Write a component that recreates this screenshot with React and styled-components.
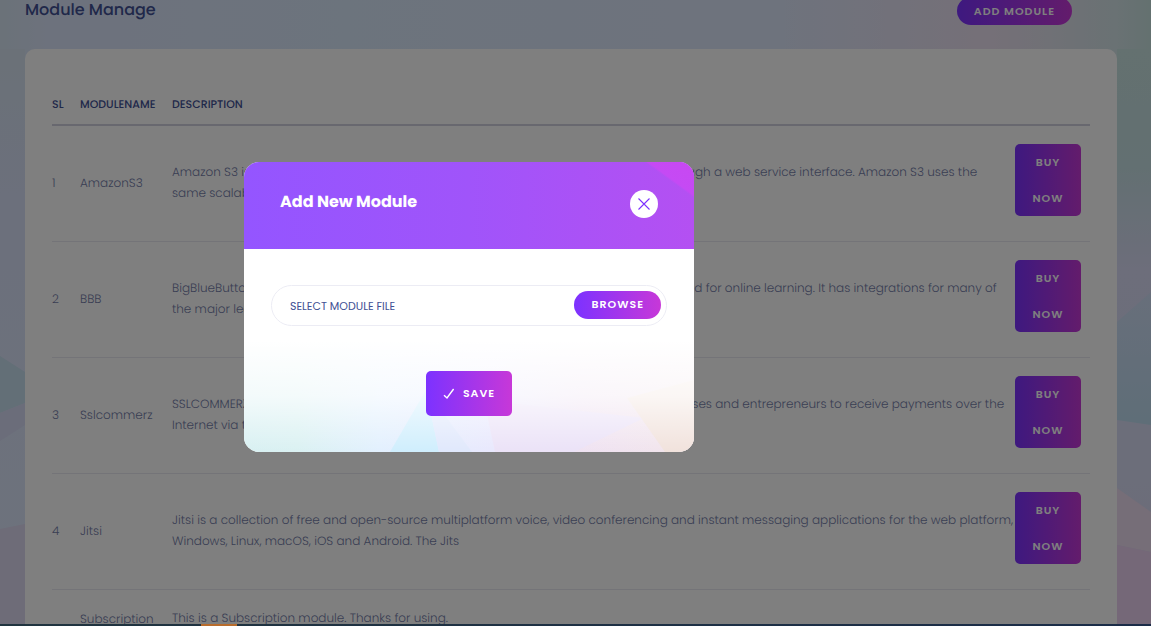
import React from "react";
import styled, { createGlobalStyle } from "styled-components";

const GlobalStyle = createGlobalStyle`
  *, *::before, *::after { box-sizing: border-box; }
  html, body { margin: 0; height: 100%; overflow: hidden; }
  body {
    background: #dde6fb;
    color: #747da8;
    font-family: Poppins, Inter, sans-serif;
    font-size: 12px;
    font-weight: 300;
    line-height: 21px;
    text-rendering: geometricPrecision;
  }
  button, input { font: inherit; }
`;

const Page = styled.main`
  position: relative;
  height: 100vh;
  overflow: hidden;
  padding: 0 34px 0 25px;
  background: linear-gradient(90deg, #d6e4f2 0%, #dbe4fa 4%, #d9e8fa 30%, #dde6fa 68%, #ebe0f0 86%, #d4e4e8 97%, #c8e2e0 100%);
`;

const Backdrop = styled.svg`
  position: absolute;
  inset: 0;
  width: 100%;
  height: 100%;
`;

const PageHeader = styled.header`
  position: relative;
  display: flex;
  align-items: center;
  justify-content: space-between;
  height: 22px;
  margin-bottom: 27px;
  padding-right: 45px;
`;

const PageTitle = styled.h1`
  margin: 0;
  padding-bottom: 2px;
  color: #415094;
  font-size: 16px;
  font-weight: 500;
  line-height: 20px;
`;

const Button = styled.button`
  display: inline-flex;
  align-items: center;
  justify-content: center;
  gap: 8px;
  height: ${(p) => (p.$pill ? 28 : 45)}px;
  padding: 0 17px;
  border: 0;
  border-radius: ${(p) => (p.$pill ? 14 : 5)}px;
  background: linear-gradient(90deg, #7c32ff 0%, #c738d8 100%);
  color: #fff;
  font-size: 11px;
  font-weight: 600;
  letter-spacing: 1px;
  text-transform: uppercase;
  white-space: nowrap;
  cursor: pointer;
`;

const BuyButton = styled(Button)`
  display: block;
  width: 66px;
  height: auto;
  padding: 0 16px;
  line-height: 36px;
  white-space: normal;
`;

const Card = styled.section`
  position: relative;
  min-height: 100%;
  padding: 35px 27px 0;
  border-radius: 10px;
  background: #fff;
`;

const Table = styled.table`
  width: 100%;
  table-layout: fixed;
  border-collapse: separate;
  border-spacing: 0;
`;

const Col = styled.col`
  width: ${(p) => p.$w}px;
`;

const HeadCell = styled.th`
  height: 42px;
  padding: 0;
  border-bottom: 2px solid #d0d1df;
  color: #415094;
  font-size: 11px;
  font-weight: 500;
  text-align: left;
  text-transform: uppercase;
`;

const Cell = styled.td`
  padding: 18px 0;
  border-bottom: 1px solid #e9e9f0;
  vertical-align: middle;
  white-space: pre-line;
`;

const ActionCell = styled(Cell)`
  padding: 18px 0 25px;
`;

const Description = styled.p`
  min-height: 44px;
  margin: 0;
  padding-bottom: 2px;
`;

const Overlay = styled.div`
  position: fixed;
  inset: 0;
  display: flex;
  align-items: center;
  justify-content: center;
  padding: 0 213px 12px 0;
  background: rgba(0, 0, 0, 0.5);
`;

const Modal = styled.section`
  width: 450px;
  max-width: 90%;
  border-radius: 15px;
  overflow: hidden;
  background: #fff;
`;

const ModalHeader = styled.header`
  display: flex;
  align-items: center;
  justify-content: space-between;
  height: 87px;
  padding: 0 36px 3px;
  background:
    linear-gradient(216deg, #c848f2 0, #c54af4 27px, transparent 29px),
    linear-gradient(90deg, #9455ff 0%, #a054fa 50%, #b450f2 100%);
`;

const ModalTitle = styled.h2`
  margin: 0;
  padding-bottom: 6px;
  color: #fff;
  font-size: 16px;
  font-weight: 700;
`;

const CloseButton = styled.button`
  display: flex;
  align-items: center;
  justify-content: center;
  width: 28px;
  height: 28px;
  padding: 0;
  border: 0;
  border-radius: 50%;
  background: #fff;
  color: #7c32ff;
  cursor: pointer;
`;

const ModalBody = styled.form`
  position: relative;
  display: flex;
  flex-direction: column;
  align-items: center;
  gap: 45px;
  padding: 36px 27px;
`;

const ModalArt = styled.svg`
  position: absolute;
  left: 0;
  bottom: 0;
  width: 100%;
  height: 112px;
`;

const FilePicker = styled.div`
  position: relative;
  display: flex;
  align-items: center;
  width: 100%;
  height: 41px;
  padding: 0 5px 2px 18px;
  border: 1px solid #ececf4;
  border-radius: 21px;
  background: #fff;
`;

const FileName = styled.input`
  flex: 1;
  min-width: 0;
  padding: 4px 0 0;
  border: 0;
  outline: 0;
  background: transparent;
  font-size: 11px;
  font-weight: 400;
  text-transform: uppercase;
  &::placeholder {
    color: #415094;
    opacity: 1;
  }
`;

const SaveButton = styled(Button)`
  position: relative;
`;

const Dock = styled.footer`
  position: fixed;
  inset: auto 0 0 0;
  display: flex;
  height: 2px;
  padding-left: 201px;
  background: linear-gradient(90deg, #20343f, #1b2c48);
`;

const DockItem = styled.span`
  width: 36px;
  background: #b86c2c;
`;

const modules = [
  {
    name: "AmazonS3",
    text: "Amazon S3 is a service offered by Amazon Web Services that offers object storage through a web service interface. Amazon S3 uses the\nsame scalable storage infrastructure",
  },
  {
    name: "BBB",
    text: "BigBlueButton is a free software web conferencing system for GNU/Linux servers designed for online learning. It has integrations for many of\nthe major learning and content systems",
  },
  {
    name: "Sslcommerz",
    text: "SSLCOMMERZ is the largest payment gateway in Bangladesh that enables small businesses and entrepreneurs to receive payments over the\nInternet via their online store",
  },
  {
    name: "Jitsi",
    text: "Jitsi is a collection of free and open-source multiplatform voice, video conferencing and instant messaging applications for the web platform,\nWindows, Linux, macOS, iOS and Android. The Jits",
  },
];

function PageBackdrop() {
  return (
    <Backdrop viewBox="0 0 1151 626" preserveAspectRatio="none" aria-hidden="true">
      <defs>
        <linearGradient id="rightFall" x1="0" y1="0" x2="0" y2="1">
          <stop offset="0" stopColor="#c8e2e0" />
          <stop offset="0.2" stopColor="#c6e0e4" />
          <stop offset="0.38" stopColor="#dadcf6" />
          <stop offset="0.75" stopColor="#d8dcf4" />
          <stop offset="1" stopColor="#dcd6f2" />
        </linearGradient>
        <linearGradient id="blueFacet" x1="0" y1="0" x2="0" y2="1">
          <stop offset="0" stopColor="#d0def6" />
          <stop offset="1" stopColor="#bedcf0" />
        </linearGradient>
        <linearGradient id="leftFall" x1="0" y1="0" x2="0" y2="1">
          <stop offset="0" stopColor="#d6e3f0" />
          <stop offset="0.25" stopColor="#d8e0f8" />
          <stop offset="1" stopColor="#dce6fa" />
        </linearGradient>
      </defs>
      <rect x="0" y="49" width="25" height="577" fill="url(#leftFall)" />
      <polygon points="0,356 25,372 25,403 0,413" fill="#c6deee" />
      <polygon points="0,413 25,403 25,425 0,441" fill="#d6daf4" />
      <polygon points="0,529 25,524 25,626 0,626" fill="#dcd8f0" />
      <rect x="1117" y="49" width="34" height="577" fill="url(#rightFall)" />
      <polygon points="1117,322 1151,292 1151,425 1117,420" fill="url(#blueFacet)" />
      <polygon points="1117,488 1151,512 1151,552 1117,545" fill="#ecdcf0" />
      <polygon points="1117,545 1151,552 1151,626 1117,626" fill="#ead0f0" />
    </Backdrop>
  );
}

function ModalBackdrop() {
  return (
    <ModalArt viewBox="0 0 450 112" preserveAspectRatio="none" aria-hidden="true">
      <defs>
        <linearGradient id="tint" x1="0" y1="0" x2="1" y2="0">
          <stop offset="0" stopColor="#d8f0f2" />
          <stop offset="0.12" stopColor="#daf1f2" />
          <stop offset="0.3" stopColor="#e2f0fe" />
          <stop offset="0.55" stopColor="#e8e8fd" />
          <stop offset="0.75" stopColor="#efe2f2" />
          <stop offset="1" stopColor="#f2e5ea" />
        </linearGradient>
        <linearGradient id="fade" x1="0" y1="0" x2="0" y2="1">
          <stop offset="0" stopColor="#fff" />
          <stop offset="0.5" stopColor="#fff" stopOpacity="0.7" />
          <stop offset="1" stopColor="#fff" stopOpacity="0" />
        </linearGradient>
      </defs>
      <rect width="450" height="112" fill="url(#tint)" />
      <polygon points="182,50 146,112 195,112" fill="#cfeefd" />
      <polygon points="182,50 195,112 228,112" fill="#e0e8fc" />
      <polygon points="240,60 251,112 330,112 400,78" fill="#ebe2f7" />
      <polygon points="383,58 421,112 450,112 450,40" fill="#f1e2dc" />
      <rect width="450" height="112" fill="url(#fade)" />
    </ModalArt>
  );
}

export default function App() {
  return (
    <>
      <GlobalStyle />
      <Page>
        <PageBackdrop />
        <PageHeader>
          <PageTitle>Module Manage</PageTitle>
          <Button $pill type="button">Add Module</Button>
        </PageHeader>
        <Card>
          <Table>
            <colgroup>
              <Col $w={28} />
              <Col $w={92} />
              <col />
              <Col $w={75} />
            </colgroup>
            <thead>
              <tr>
                <HeadCell scope="col">SL</HeadCell>
                <HeadCell scope="col">ModuleName</HeadCell>
                <HeadCell scope="col">Description</HeadCell>
                <HeadCell scope="col" aria-label="Action" />
              </tr>
            </thead>
            <tbody>
              {modules.map((m, i) => (
                <tr key={m.name}>
                  <Cell>{i + 1}</Cell>
                  <Cell>{m.name}</Cell>
                  <Cell>
                    <Description>{m.text}</Description>
                  </Cell>
                  <ActionCell>
                    <BuyButton type="button">Buy Now</BuyButton>
                  </ActionCell>
                </tr>
              ))}
              <tr>
                <Cell>5</Cell>
                <Cell>{"Subscription\nModule"}</Cell>
                <Cell>
                  <Description>This is a Subscription module. Thanks for using.</Description>
                </Cell>
                <Cell />
              </tr>
            </tbody>
          </Table>
        </Card>
      </Page>

      <Overlay>
        <Modal role="dialog" aria-modal="true" aria-labelledby="modal-title">
          <ModalHeader>
            <ModalTitle id="modal-title">Add New Module</ModalTitle>
            <CloseButton type="button" aria-label="Close">
              <svg width="14" height="14" viewBox="0 0 14 14" fill="none" stroke="currentColor" strokeWidth="1.1">
                <path d="M1.5 1.5 12.5 12.5M12.5 1.5 1.5 12.5" />
              </svg>
            </CloseButton>
          </ModalHeader>
          <ModalBody onSubmit={(e) => e.preventDefault()}>
            <ModalBackdrop />
            <FilePicker>
              <FileName readOnly aria-label="Module file" placeholder="Select Module File" />
              <Button $pill type="button">Browse</Button>
            </FilePicker>
            <SaveButton type="submit">
              <svg width="12" height="12" viewBox="0 0 12 12" fill="none" stroke="currentColor" strokeWidth="1.4">
                <path d="M1 7.2 4 10 10.6 1" />
              </svg>
              Save
            </SaveButton>
          </ModalBody>
        </Modal>
      </Overlay>
      <Dock>
        <DockItem />
      </Dock>
    </>
  );
}
